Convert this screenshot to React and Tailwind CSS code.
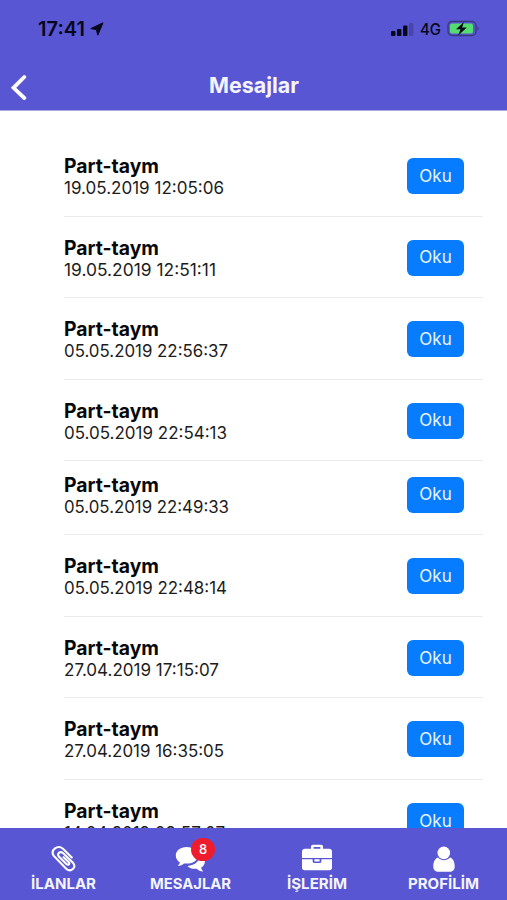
import React from 'react';

const messages = [
  { id: 1, title: 'Part-taym', date: '19.05.2019 12:05:06', width: 160 },
  { id: 2, title: 'Part-taym', date: '19.05.2019 12:51:11', width: 152 },
  { id: 3, title: 'Part-taym', date: '05.05.2019 22:56:37', width: 164 },
  { id: 4, title: 'Part-taym', date: '05.05.2019 22:54:13', width: 163 },
  { id: 5, title: 'Part-taym', date: '05.05.2019 22:49:33', width: 165, compact: true },
  { id: 6, title: 'Part-taym', date: '05.05.2019 22:48:14', width: 163 },
  { id: 7, title: 'Part-taym', date: '27.04.2019 17:15:07', width: 155 },
  { id: 8, title: 'Part-taym', date: '27.04.2019 16:35:05', width: 160 },
  { id: 9, title: 'Part-taym', date: '14.04.2019 09:57:07', width: 161 },
];

const PaperclipIcon = () => (
  <svg width="26" height="28" viewBox="0 0 26 28" fill="none" stroke="white" strokeWidth="2.1" strokeLinecap="round">
    <path d="M21.8 13.4 L13 4.7 C7.6 .4 .2 6 3.6 11.6 L16.2 24.8 C21 29 26.8 23.4 23 18.8 L13 9 C10 6.8 6.6 9.6 8.9 12.6 L16.6 20.2 C18.6 21.6 20.2 19.6 18.6 17.9 L13.6 13.2" />
  </svg>
);

const CommentsIcon = () => (
  <svg width="30" height="28" viewBox="0 0 30 28" fill="white">
    <path d="M11.7 3 C5.2 3 .8 6.8 .8 11.5 c0 3 1.7 5.5 4.1 7 -.4 1.5-1.2 2.4-2.1 3.3 2.5 0 4.7-1 6.2-2.4 8.2 1.2 14-2.7 14-7.9 0-4.7-4.8-8.5-11.3-8.5Z" />
    <path d="M25 10 c.6 6.2-4.1 11.3-12.6 11.9 2.2 2.2 5.3 3.2 9.2 2.8 1.6 1.6 3.7 2.6 6.6 2.7 -.9-1-1.8-2.3-2.1-3.6 5.3-3.2 5.1-10.2-1.1-13.8Z" />
  </svg>
);

const BriefcaseIcon = () => (
  <svg width="32" height="28" viewBox="0 0 32 28" fill="white">
    <path d="M10 4.7 V2.5 Q10 .7 11.8 .7 h8.4 q1.8 0 1.8 1.8 V4.7 H28 q3 0 3 3 v6.2 H1 V7.7 q0-3 3-3ZM12.6 4.7 h6.8 V2.9 h-6.8Z" fillRule="evenodd" />
    <path d="M1 15.2 h10.6 v1.7 q0 2.2 2.2 2.2 h4.4 q2.2 0 2.2-2.2 v-1.7 H31 V23.6 q0 2.7-2.7 2.7 H3.7 Q1 26.3 1 23.6ZM13.4 15.2 h5.2 v2.2 h-5.2Z" />
  </svg>
);

const UserIcon = () => (
  <svg width="24" height="28" viewBox="0 0 24 28" fill="white">
    <circle cx="11.8" cy="8.9" r="6.3" />
    <path d="M6 13.5 C2.2 14.7 1.3 19 1.3 22.5 c0 3.8 2.3 5.3 5.1 5.3 h11.2 c2.8 0 5.1-1.5 5.1-5.3 0-3.5-.9-7.8-4.7-9 C14.2 17 9.8 17 6 13.5Z" />
  </svg>
);

const tabs = [
  { label: 'İLANLAR', icon: PaperclipIcon, width: 65 },
  { label: 'MESAJLAR', icon: CommentsIcon, badge: 8, width: 81 },
  { label: 'İŞLERİM', icon: BriefcaseIcon, width: 60 },
  { label: 'PROFİLİM', icon: UserIcon, width: 71 },
];

// Label drawn at a fixed width, whatever the glyph metrics are
const FitText = ({ width, height, baseline, size, weight, fill, children }) => (
  <svg width={width} height={height} className="block overflow-visible">
    <text x="0" y={baseline} textLength={width} lengthAdjust="spacingAndGlyphs" fontSize={size} fontWeight={weight} fill={fill}>
      {children}
    </text>
  </svg>
);

const StatusBar = () => (
  <div className="h-[58px] flex items-center justify-between pl-[38px] pr-[27px]">
    <div className="flex items-center gap-[5px]">
      <FitText width={47} height={20} baseline={17} size={19.5} weight={600} fill="#07071a">17:41</FitText>
      <svg width="14" height="14" viewBox="0 0 14 14" fill="#07071a" stroke="#07071a" strokeLinejoin="round">
        <path d="M13 .8 L.8 6.6 L6.4 7.6 L7.8 13.2Z" />
      </svg>
    </div>
    <div className="flex items-center">
      <svg width="24" height="16" viewBox="0 0 24 16" fill="#07071a">
        <rect x="1" y="10" width="4.4" height="5" rx="1" />
        <rect x="7" y="8" width="4.4" height="7" rx="1" />
        <rect x="13" y="4.5" width="4.4" height="10.5" rx="1" />
        <rect x="19" y="2" width="4.4" height="13" rx="1" opacity=".2" />
      </svg>
      <div className="ml-[6px] mr-[6px]">
        <FitText width={21} height={18} baseline={14.5} size={16} weight={500} fill="#07071a">4G</FitText>
      </div>
      <svg width="33" height="18" viewBox="0 0 33 18">
        <rect x="1" y="1.5" width="28" height="14" rx="4" fill="none" stroke="#393780" strokeWidth="1.3" />
        <rect x="3" y="3.4" width="23" height="10.2" rx="2" fill="#55dc70" />
        <path d="M30.5 6 Q33 8.5 30.5 11Z" fill="#393780" />
        <path d="M17 2 L9 9.3 H13.5 L11.2 15.5 L19.8 7.6 H15.1Z" fill="#07071a" />
      </svg>
    </div>
  </div>
);

const MessageRow = ({ message }) => (
  <div
    className={`flex justify-between items-start shrink-0 ml-16 mr-6 pr-[19px] border-b border-[#ebebed] ${
      message.compact ? 'h-[74.4px] pt-[12.6px]' : 'h-[81.5px] pt-5'
    }`}
  >
    <div>
      <FitText width={95} height={22} baseline={17.5} size={19.5} weight={700} fill="#080808">{message.title}</FitText>
      <FitText width={message.width} height={22} baseline={16.6} size={17} weight={400} fill="#1c1c1c">{message.date}</FitText>
    </div>
    <button className="mt-[3px] w-[57px] h-9 rounded-[6px] bg-[#087cfe] text-[#e9f4ff] text-[17px] flex items-center justify-center pt-px">
      Oku
    </button>
  </div>
);

export default function App() {
  return (
    <div className="h-[900px] w-[507px] flex flex-col overflow-hidden bg-white font-['Inter',sans-serif]">
      <header className="h-[111px] shrink-0 bg-[#5856d2] border-b border-[#aaa9df]">
        <StatusBar />
        <div className="flex h-[53px] items-center px-[10px]">
          <svg width="18" height="30" viewBox="0 0 18 30" fill="none" stroke="white" strokeWidth="3.8" strokeLinecap="round">
            <path d="M14.3 7 L3.5 17.8 L14.3 28" />
          </svg>
          <h1 className="flex flex-1 justify-center pl-[1px] pr-[19px]">
            <FitText width={90} height={26} baseline={21} size={22} weight={650} fill="#f4f4ff">Mesajlar</FitText>
          </h1>
        </div>
      </header>

      <main className="flex-1 min-h-0 overflow-hidden flex flex-col pt-6">
        {messages.map((message) => (
          <MessageRow key={message.id} message={message} />
        ))}
      </main>

      <nav className="h-[72px] shrink-0 grid grid-cols-4 bg-[#5856d2]">
        {tabs.map((tab) => (
          <div key={tab.label} className="flex flex-col items-center pt-4">
            <div className="relative">
              <tab.icon />
              {tab.badge && (
                <span className="absolute -top-[6px] left-[16px] w-6 h-[23px] rounded-full bg-[#ee1d2e] text-white text-[13px] font-medium flex items-center justify-center">
                  {tab.badge}
                </span>
              )}
            </div>
            <div className="mt-[3px]">
              <FitText width={tab.width} height={18} baseline={14} size={14.3} weight={700} fill="#f4f4ff">{tab.label}</FitText>
            </div>
          </div>
        ))}
      </nav>
    </div>
  );
}
